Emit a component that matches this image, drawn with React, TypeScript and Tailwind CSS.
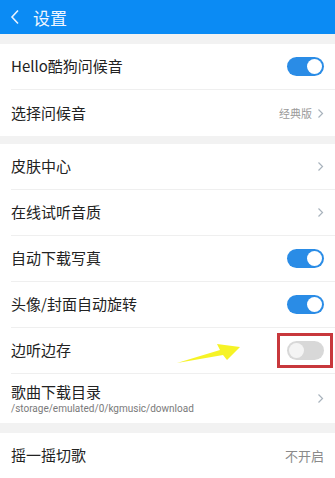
import React from "react";

const font = { fontFamily: '"Noto Sans CJK SC", "Noto Sans", sans-serif' };

function Toggle({ on }: { on: boolean }) {
  return (
    <div
      className={
        "w-[37px] h-[19px] rounded-full flex items-center px-[2px] " +
        (on ? "bg-[#2a8ce6] justify-end" : "bg-[#d8d8d8] justify-start")
      }
    >
      <div className={"w-[15px] h-[15px] rounded-full " + (on ? "bg-white" : "bg-[#f4f4f4]")} />
    </div>
  );
}

function Chevron() {
  return (
    <svg width="7" height="11" viewBox="0 0 7 11" className="ml-[5px]">
      <path d="M1.5 1.5 L5.5 5.5 L1.5 9.5" fill="none" stroke="#a9b3bd" strokeWidth="1.2" />
    </svg>
  );
}

function Row({ label, children }: { label: string; children?: React.ReactNode }) {
  return (
    <div className="h-[45px] flex items-center justify-between pl-[11px] pr-[11px]">
      <span className="text-[15px] text-[#222]">{label}</span>
      <div className="flex items-center">{children}</div>
    </div>
  );
}

function Divider() {
  return <div className="ml-[11px] h-px bg-[#efefef]" />;
}

export default function App() {
  return (
    <div className="w-[335px] h-[478px] bg-[#f2f2f2] overflow-hidden relative" style={font}>
      <div className="h-[34px] bg-[#0b8bf4] flex items-center pl-[10px]">
        <svg width="10" height="16" viewBox="0 0 10 16">
          <path d="M8 1.5 L2 8 L8 14.5" fill="none" stroke="#e8f2ff" strokeWidth="1.6" />
        </svg>
        <span className="ml-[13px] text-[17px] text-[#f0f6ff] leading-none">设置</span>
      </div>

      <div className="mt-[10px] bg-white">
        <Row label="Hello酷狗问候音">
          <Toggle on />
        </Row>
        <Divider />
        <div className="h-[46px] flex items-center justify-between pl-[11px] pr-[11px]">
          <span className="text-[15px] text-[#222]">选择问候音</span>
          <div className="flex items-center">
            <span className="text-[11px] text-[#9a9a9a]">经典版</span>
            <Chevron />
          </div>
        </div>
      </div>

      <div className="mt-[8px] bg-white">
        <Row label="皮肤中心">
          <Chevron />
        </Row>
        <Divider />
        <Row label="在线试听音质">
          <Chevron />
        </Row>
        <Divider />
        <Row label="自动下载写真">
          <Toggle on />
        </Row>
        <Divider />
        <Row label="头像/封面自动旋转">
          <Toggle on />
        </Row>
        <Divider />
        <Row label="边听边存">
          <Toggle on={false} />
        </Row>
        <Divider />
        <div className="h-[49px] flex items-center justify-between pl-[11px] pr-[11px]">
          <div className="flex flex-col">
            <span className="text-[15px] text-[#222] leading-[20px]">歌曲下载目录</span>
            <span className="text-[10px] text-[#7a7a7a] leading-[14px]" style={{ fontFamily: '"Roboto", "Noto Sans", sans-serif' }}>
              /storage/emulated/0/kgmusic/download
            </span>
          </div>
          <Chevron />
        </div>
      </div>

      <div className="mt-[10px] bg-white">
        <Row label="摇一摇切歌">
          <span className="text-[13px] text-[#8a8a8a]">不开启</span>
        </Row>
        <Divider />
      </div>

      {/* red highlight box */}
      <div className="absolute left-[277px] top-[333px] w-[56px] h-[35px] border-[3px] border-[#c8383c]" />

      {/* yellow arrow */}
      <svg className="absolute left-[170px] top-[336px]" width="80" height="32" viewBox="0 0 80 32">
        <path d="M7 27 L50 14 L47 8 L70 11 L57 24 L53 19 Z" fill="#f5f21a" opacity="0.95" />
      </svg>
    </div>
  );
}
